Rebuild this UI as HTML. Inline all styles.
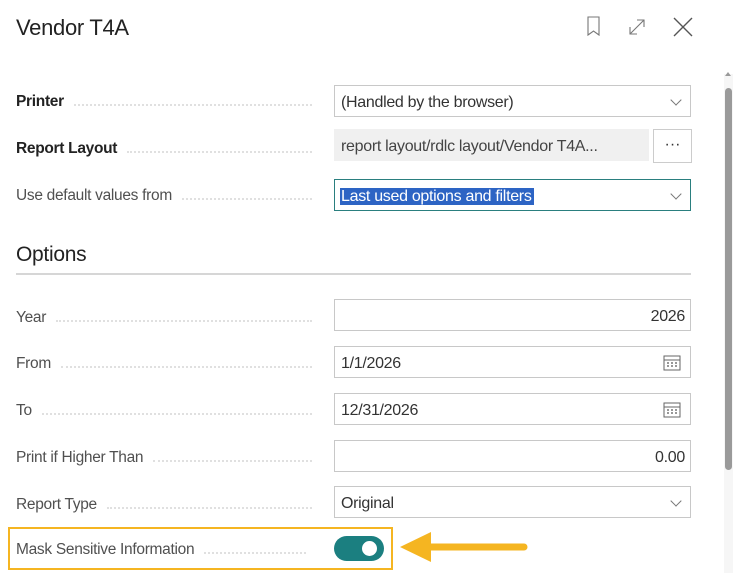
<!DOCTYPE html>
<html><head><style>
body{margin:0;width:734px;height:573px;background:#fff;font-family:"Liberation Sans",sans-serif;color:#505050;position:relative;overflow:hidden}
.a{position:absolute}
.t{left:16px;top:15px;font-size:22px;color:#222;letter-spacing:-0.3px}
.lbl{left:16px;font-size:15.5px;letter-spacing:-0.3px;width:310px;white-space:nowrap;display:flex;align-items:center}
.lbl b{font-weight:bold;color:#222}
.lbl .d{flex:1;border-bottom:2px dotted #e0e0e0;margin:0 14px 0 10px;height:0;position:relative;top:3px}
.in{left:334px;width:355px;height:30px;border:1px solid #c8c8c8;font-size:16px;color:#333;line-height:33px;box-sizing:content-box;letter-spacing:-0.3px}
.in span{padding-left:6px}
.r{text-align:right}.r span{padding-right:5px}
.chev{position:absolute;right:10px;top:10px;width:7px;height:7px;border-right:1.2px solid #777;border-bottom:1.2px solid #777;transform:rotate(45deg)}
.cal{position:absolute;right:9px;top:7px}
</style></head><body>
<div class="a t">Vendor T4A</div>
<svg class="a" style="left:583px;top:14px" width="110" height="26" viewBox="0 0 110 26">
<path d="M5 3h11v18l-5.5-4-5.5 4z" fill="none" stroke="#777" stroke-width="1.1"/>
<path d="M47 20l14-14M54 6h7v7M47 13v7h7" fill="none" stroke="#777" stroke-width="1.1"/>
<path d="M91 4l18 18M109 4l-18 18" stroke="#555" stroke-width="1.4"/>
</svg>
<div class="a" style="left:724px;top:74px;width:9px;height:499px;background:#f6f6f6"></div>
<div class="a" style="left:725px;top:88px;width:7px;height:382px;background:#9a9a9a;border-radius:4px"></div>
<div class="a" style="left:725px;top:72px;width:0;height:0;border-left:3px solid transparent;border-right:3px solid transparent;border-bottom:4px solid #999"></div>

<div class="a lbl" style="top:93px"><b>Printer</b><span class="d"></span></div>
<div class="a in" style="top:85px"><span>(Handled by the browser)</span><i class="chev"></i></div>
<div class="a lbl" style="top:140px"><b>Report Layout</b><span class="d"></span></div>
<div class="a in" style="top:129px;width:313px;border-color:#f0f0f0;background:#f0f0f0;color:#444"><span>report layout/rdlc layout/Vendor T4A...</span></div>
<div class="a" style="left:653px;top:129px;width:37px;height:32px;border:1px solid #ccc;text-align:center;font-size:16px;line-height:30px;color:#333">···</div>
<div class="a lbl" style="top:187px">Use default values from<span class="d"></span></div>
<div class="a in" style="top:179px;border-color:#2a7f7f"><span style="background:#2d64c4;color:#fff;padding:0 2px 0 1px;margin-left:5px">Last used options and filters</span><i class="chev"></i></div>

<div class="a" style="left:16px;top:243px;font-size:21px;color:#222;letter-spacing:-0.3px">Options</div>
<div class="a" style="left:16px;top:273px;width:675px;height:2px;background:#d6d6d6"></div>

<div class="a lbl" style="top:309px">Year<span class="d"></span></div>
<div class="a in r" style="top:299px"><span>2026</span></div>
<div class="a lbl" style="top:355px">From<span class="d"></span></div>
<div class="a in" style="top:346px"><span>1/1/2026</span><svg class="cal" width="18" height="17" viewBox="0 0 18 17"><rect x="1" y="2" width="16" height="14" fill="none" stroke="#666"/><path d="M1 6h16" stroke="#666"/><path d="M4 9h2M8 9h2M12 9h2M4 12h2M8 12h2M12 12h2" stroke="#777" stroke-width="1.5"/></svg></div>
<div class="a lbl" style="top:402px">To<span class="d"></span></div>
<div class="a in" style="top:393px"><span>12/31/2026</span><svg class="cal" width="18" height="17" viewBox="0 0 18 17"><rect x="1" y="2" width="16" height="14" fill="none" stroke="#666"/><path d="M1 6h16" stroke="#666"/><path d="M4 9h2M8 9h2M12 9h2M4 12h2M8 12h2M12 12h2" stroke="#777" stroke-width="1.5"/></svg></div>
<div class="a lbl" style="top:449px">Print if Higher Than<span class="d"></span></div>
<div class="a in r" style="top:440px"><span>0.00</span></div>
<div class="a lbl" style="top:496px">Report Type<span class="d"></span></div>
<div class="a in" style="top:486px"><span>Original</span><i class="chev"></i></div>

<div class="a" style="left:8px;top:527px;width:381px;height:39px;border:2px solid #f5b521"></div>
<div class="a lbl" style="top:541px">Mask Sensitive Information<span class="d" style="margin-right:20px"></span></div>
<div class="a" style="left:334px;top:536px;width:50px;height:25px;border-radius:13px;background:#1b7f80"></div>
<div class="a" style="left:362px;top:541px;width:15px;height:15px;border-radius:50%;background:#fff"></div>
<svg class="a" style="left:398px;top:530px" width="134" height="34" viewBox="0 0 134 34">
<path d="M30 17H126" stroke="#f5b521" stroke-width="7" stroke-linecap="round"/>
<path d="M2 17L33 2V32z" fill="#f5b521"/>
</svg>
</body></html>
